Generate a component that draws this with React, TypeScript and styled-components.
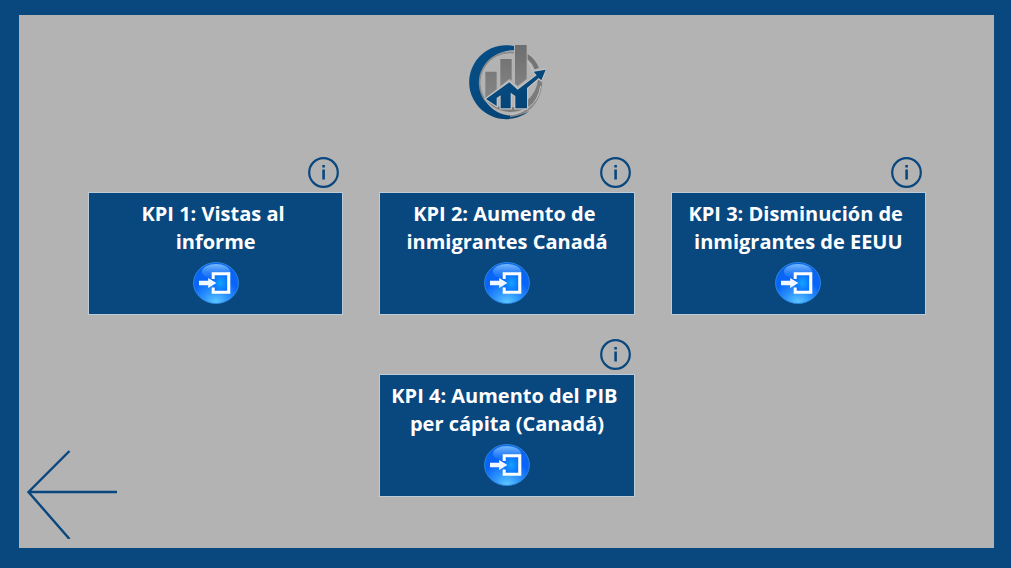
import React from "react";
import styled, { createGlobalStyle } from "styled-components";

const BLUE = "#09477f";
const GREY = "#b3b3b3";

const GlobalStyle = createGlobalStyle`
  * { box-sizing: border-box; }
  body {
    margin: 0;
    background: ${BLUE};
    font-family: "Open Sans", "Noto Sans", sans-serif;
  }
`;

const Frame = styled.div`
  display: flex;
  min-height: 100vh;
  padding: 15px 17px 20px 19px;
  background: ${BLUE};
`;

const Panel = styled.main`
  flex: 1;
  display: grid;
  background: ${GREY};
`;

const Content = styled.div`
  grid-area: 1 / 1;
  display: flex;
  flex-direction: column;
  align-items: center;
  gap: 37px;
  padding: 29px 68px 51px 69px;
`;

const KpiGrid = styled.div`
  display: grid;
  grid-template-columns: repeat(3, 1fr);
  gap: 24px 36px;
  width: 100%;
`;

const KpiItem = styled.section<{ $column: number }>`
  grid-column: ${(p) => p.$column};
  display: flex;
  flex-direction: column;
  gap: 4px;
`;

const IconButton = styled.button`
  display: block;
  padding: 0;
  border: 0;
  background: none;
  cursor: pointer;

  svg { display: block; }
`;

const InfoButton = styled(IconButton)`
  align-self: flex-end;
  margin-right: 4px;
`;

const Card = styled.div`
  display: flex;
  flex-direction: column;
  align-items: center;
  gap: 6px;
  min-height: 123px;
  padding: 7px 4px;
  border: 1px solid #bccbd8;
  background: ${BLUE};
`;

const CardTitle = styled.h2`
  margin: 0;
  color: #fff;
  font-size: 20px;
  font-weight: 700;
  line-height: 28px;
  text-align: center;
  white-space: pre;
`;

const BackButton = styled(IconButton)`
  grid-area: 1 / 1;
  place-self: end start;
  margin: 0 0 9px 7px;
`;

const Logo = () => (
  <svg width="78" height="76" viewBox="24 24 234 228" role="img" aria-label="Logo">
    <defs>
      <linearGradient id="bar" x1="0" y1="0" x2="0" y2="1">
        <stop offset="0" stopColor="#6e6e6e" />
        <stop offset="1" stopColor="#858585" />
      </linearGradient>
      <linearGradient id="crescent" x1="0" y1="0" x2="1" y2="1">
        <stop offset="0" stopColor="#07508a" />
        <stop offset="1" stopColor="#03406f" />
      </linearGradient>
    </defs>
    <path d="M162 30A111 111 0 1 0 208 225A98 98 0 1 1 162 43Z" fill="url(#crescent)" />
    <path d="M162 50A91 91 0 0 0 78 196" fill="none" stroke="#8a8a8a" strokeWidth="5" />
    <path d="M76 190A95 95 0 0 0 247 132L234 126A92 92 0 0 1 92 200Z" fill="#7b7b7b" />
    <path d="M150 236Q228 230 242 150" fill="none" stroke="#c6c6c6" strokeWidth="3" />
    <path d="M150 244Q236 234 249 138Q236 222 150 240Z" fill="#858585" />
    <path d="M203 54Q226 69 237 96L224 100Q217 82 203 70Z" fill="#747474" />
    <path d="M203 77Q212 84 217 102" fill="none" stroke="#c6c6c6" strokeWidth="3" />
    <path d="M76 107H110V160L76 187ZM121 69H155V134L148 129L121 151ZM165 27H200V129L173 150L165 143Z" fill="url(#bar)" />
    <path
      d="M78 189L148 139L173 161L230 118L221 107L257 101L244 133L236 126L201 156V217H166V180L152 170V217H122V178L110 186V210Q97 202 78 189Z"
      fill="url(#crescent)"
      stroke="#c2c2c2"
      strokeWidth="7"
      paintOrder="stroke"
    />
  </svg>
);

const InfoIcon = () => (
  <svg width="31" height="31" viewBox="0 0 31 31" aria-hidden="true">
    <circle cx="15.5" cy="15.5" r="14.3" fill="none" stroke={BLUE} strokeWidth="2.2" />
    <path d="M14.3 8h2.6v2.5h-2.6zM14.3 12.5h2.6v10h-2.6z" fill={BLUE} />
  </svg>
);

const EnterIcon = () => (
  <svg width="46" height="42" viewBox="0 0 46 42" aria-hidden="true">
    <defs>
      <radialGradient id="orb" cx=".5" cy="1" r="1">
        <stop offset="0" stopColor="#62cbff" />
        <stop offset=".28" stopColor="#2f98ff" />
        <stop offset=".6" stopColor="#0864fa" />
        <stop offset="1" stopColor="#0a67ee" />
      </radialGradient>
      <linearGradient id="gloss" x1="0" y1="0" x2="0" y2="1">
        <stop offset="0" stopColor="#8cc9ff" stopOpacity=".85" />
        <stop offset="1" stopColor="#3a8fff" stopOpacity=".15" />
      </linearGradient>
      <radialGradient id="glow">
        <stop offset="0" stopColor="#12a4ff" />
        <stop offset="1" stopColor="#0b72ff" />
      </radialGradient>
    </defs>
    <ellipse cx="23" cy="21" rx="22.4" ry="20.5" fill="url(#orb)" stroke="#2d86da" strokeWidth="1" />
    <ellipse cx="23" cy="9.5" rx="14" ry="7.5" fill="url(#gloss)" />
    <path d="M20 12H35V30H20Z" fill="url(#glow)" />
    <path d="M18.7 17V10.3H37.3V31.7H18.7V25.4H21.7V28.8H34.2V13.2H21.7V17Z" fill="#fff" />
    <path d="M6 18.8H15.2V16L23.4 21L15.2 26V23.2H6Z" fill="#f2f8ff" />
  </svg>
);

const BackIcon = () => (
  <svg width="92" height="92" viewBox="0 0 92 92" aria-hidden="true">
    <path d="M91 45H2M43.500 4L2.500 45L43.500 92" fill="none" stroke={BLUE} strokeWidth="2.400" />
  </svg>
);

/* Titles keep the space before the line break, which takes part in centring. */
const kpis = [
  { column: 1, title: "KPI 1: Vistas al\u00a0\ninforme" },
  { column: 2, title: "KPI 2: Aumento de\u00a0\ninmigrantes Canadá" },
  { column: 3, title: "KPI 3: Disminución de\u00a0\ninmigrantes de EEUU" },
  { column: 2, title: "KPI 4: Aumento del PIB\u00a0\nper cápita (Canadá)" },
];

export default function App() {
  return (
    <>
      <GlobalStyle />
      <Frame>
        <Panel>
          <Content>
            <Logo />
            <KpiGrid>
              {kpis.map(({ column, title }, i) => (
                <KpiItem key={title} $column={column}>
                  <InfoButton type="button" aria-label={`Información KPI ${i + 1}`}>
                    <InfoIcon />
                  </InfoButton>
                  <Card>
                    <CardTitle>{title}</CardTitle>
                    <IconButton type="button" aria-label={`Abrir KPI ${i + 1}`}>
                      <EnterIcon />
                    </IconButton>
                  </Card>
                </KpiItem>
              ))}
            </KpiGrid>
          </Content>
          <BackButton type="button" aria-label="Volver">
            <BackIcon />
          </BackButton>
        </Panel>
      </Frame>
    </>
  );
}
